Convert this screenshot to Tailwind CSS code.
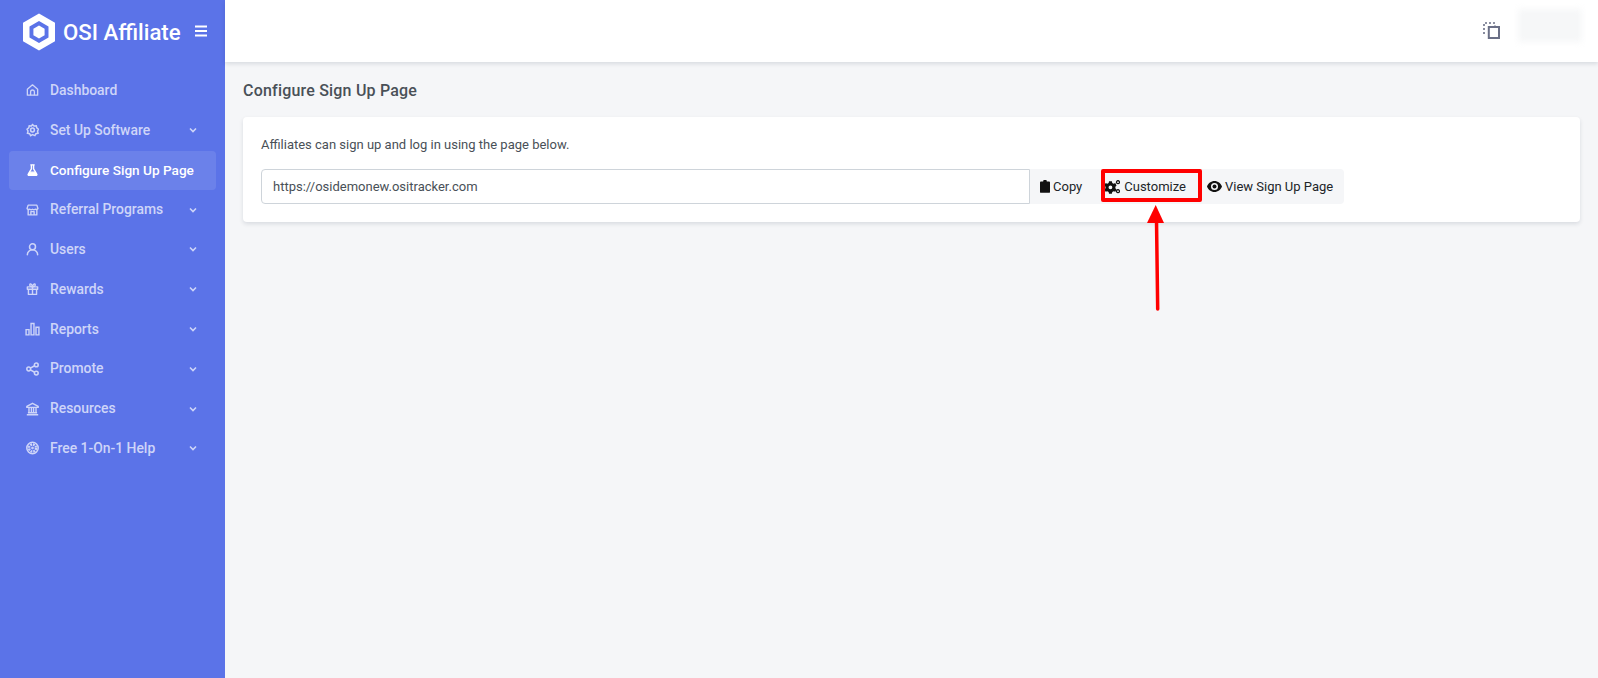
<!DOCTYPE html>
<html lang="en">
<head>
  <meta charset="UTF-8" />
  <title>Configure Sign Up Page</title>
  <script src="https://cdn.jsdelivr.net/npm/@tailwindcss/browser@4"></script>
</head>
<body class="bg-[#f5f6f8] font-['Roboto',sans-serif] h-[678px] overflow-hidden">
  <div class="flex h-[678px] relative">
    <!-- Sidebar -->
    <aside class="w-[225px] shrink-0 bg-[#5b73e8] h-full">
      <div class="h-[62px] flex items-center pl-[22px] pr-[17px]">
        <svg class="w-[34px] h-[38px] shrink-0 mt-[2px]" viewBox="0 0 34 38">
          <path fill="#fff" fill-rule="evenodd" d="M17 0.500 33 9.800V28.200L17 37.500 1 28.200V9.800Z M17 8 7.500 13.500V24.500L17 30 26.500 24.500V13.500Z"/>
          <path fill="#fff" d="M17 12.500 22.600 15.800V22.200L17 25.500 11.400 22.200V15.800Z"/>
        </svg>
        <span class="ml-[7px] text-white text-[22.200px] font-medium leading-none whitespace-nowrap mt-[2px]">OSI Affiliate</span>
        <svg class="w-[14px] h-[14px] ml-auto shrink-0" viewBox="0 0 14 14" fill="none" stroke="#fff" stroke-width="2"><path d="M1 2.500h12M1 7h12M1 11.500h12"/></svg>
      </div>
      <nav class="pt-[8.300px] px-[9px] text-[13.9px] font-medium text-[#ced5f8]">
        <a class="h-[39.8px] flex items-center pl-[17px] pr-[18px]">
          <svg class="w-[13px] h-[14px] shrink-0 mr-[11px]" viewBox="0 0 24 24" fill="none" stroke="currentColor" stroke-width="2.400" stroke-linejoin="round"><path d="M2.500 10.500 12 2.500l9.500 8V21.500h-19Z"/><path d="M8.500 21.500v-6a3.500 3.500 0 0 1 7 0v6"/></svg>
          <span>Dashboard</span>
        </a>
        <a class="h-[39.8px] flex items-center pl-[17px] pr-[18px]">
          <svg class="w-[13px] h-[14px] shrink-0 mr-[11px]" viewBox="0 0 24 24" fill="none" stroke="currentColor" stroke-width="2.800"><circle cx="12" cy="12" r="3.500"/><path d="M12 2l3 2.600 4-.4.900 3.900 3.100 2.400-1.700 3.500 1 3.900-3.900 1-2 3.500L12 20.600 8.600 22.400l-2-3.500-3.900-1 1-3.900L2 10.500l3.100-2.400.9-3.900 4 .4Z"/></svg>
          <span>Set Up Software</span>
          <svg class="w-[10px] h-[10px] ml-auto shrink-0" viewBox="0 0 10 10" fill="none" stroke="currentColor" stroke-width="1.600"><path d="M2 3.500 5 6.500 8 3.500"/></svg>
        </a>
        <a class="h-[39px] mt-[1.100px] -mb-[0.300px] flex items-center pl-[17px] pr-[13px] rounded-[4px] bg-white/10 text-white text-[13.6px]">
          <svg class="w-[13px] h-[14px] shrink-0 mr-[11px]" viewBox="0 0 24 24" fill="none" stroke="currentColor" stroke-width="2.600" stroke-linejoin="round"><path d="M8 2.500h8M10 3v7L4 20a1.500 1.500 0 0 0 1.500 2h13a1.500 1.500 0 0 0 1.500-2L14 10V3"/><path fill="currentColor" d="M7 16h10l2 5H5Z"/></svg>
          <span class="whitespace-nowrap">Configure Sign Up Page</span>
        </a>
        <a class="h-[39.8px] flex items-center pl-[17px] pr-[18px]">
          <svg class="w-[13px] h-[14px] shrink-0 mr-[11px]" viewBox="0 0 24 24" fill="none" stroke="currentColor" stroke-width="2.600" stroke-linejoin="round"><path d="M4 3h16l2 6a3.300 3.300 0 0 1-5 1.500 4 4 0 0 1-5 0 4 4 0 0 1-5 0A3.300 3.300 0 0 1 2 9Z"/><path d="M4 11v10h16V11M9 21v-6h6v6"/></svg>
          <span>Referral Programs</span>
          <svg class="w-[10px] h-[10px] ml-auto shrink-0" viewBox="0 0 10 10" fill="none" stroke="currentColor" stroke-width="1.600"><path d="M2 3.500 5 6.500 8 3.500"/></svg>
        </a>
        <a class="h-[39.8px] flex items-center pl-[17px] pr-[18px]">
          <svg class="w-[13px] h-[14px] shrink-0 mr-[11px]" viewBox="0 0 24 24" fill="none" stroke="currentColor" stroke-width="2.800" stroke-linecap="round"><circle cx="12" cy="8" r="5.500"/><path d="M2.500 22.500a9.500 9 0 0 1 19 0"/></svg>
          <span>Users</span>
          <svg class="w-[10px] h-[10px] ml-auto shrink-0" viewBox="0 0 10 10" fill="none" stroke="currentColor" stroke-width="1.600"><path d="M2 3.500 5 6.500 8 3.500"/></svg>
        </a>
        <a class="h-[39.8px] flex items-center pl-[17px] pr-[18px]">
          <svg class="w-[13px] h-[14px] shrink-0 mr-[11px]" viewBox="0 0 24 24" fill="none" stroke="currentColor" stroke-width="2.600" stroke-linejoin="round"><path d="M2.500 8h19v4.500h-19ZM4.500 12.500V22h15v-9.500M12 8v14"/><path d="M12 8C9 8 6.500 6.500 7 4s4-2 5 4c1-6 4.500-6.500 5-4s-2 4-5 4Z"/></svg>
          <span>Rewards</span>
          <svg class="w-[10px] h-[10px] ml-auto shrink-0" viewBox="0 0 10 10" fill="none" stroke="currentColor" stroke-width="1.600"><path d="M2 3.500 5 6.500 8 3.500"/></svg>
        </a>
        <a class="h-[39.8px] flex items-center pl-[16px] pr-[18px]">
          <svg class="w-[15px] h-[14px] shrink-0 mr-[10px]" viewBox="0 0 25 24" fill="none" stroke="currentColor" stroke-width="2.400"><path d="M1.500 13h5v9h-5ZM10 2.500h5V22h-5ZM18.500 9h5v13h-5Z"/></svg>
          <span>Reports</span>
          <svg class="w-[10px] h-[10px] ml-auto shrink-0" viewBox="0 0 10 10" fill="none" stroke="currentColor" stroke-width="1.600"><path d="M2 3.500 5 6.500 8 3.500"/></svg>
        </a>
        <a class="h-[39.8px] flex items-center pl-[17px] pr-[18px]">
          <svg class="w-[13px] h-[14px] shrink-0 mr-[11px]" viewBox="0 0 24 24" fill="none" stroke="currentColor" stroke-width="2.800"><circle cx="5" cy="12" r="3.500"/><circle cx="19" cy="4.500" r="3.500"/><circle cx="19" cy="19.500" r="3.500"/><path d="M8 10.300 16 6M8 13.700 16 18"/></svg>
          <span>Promote</span>
          <svg class="w-[10px] h-[10px] ml-auto shrink-0" viewBox="0 0 10 10" fill="none" stroke="currentColor" stroke-width="1.600"><path d="M2 3.500 5 6.500 8 3.500"/></svg>
        </a>
        <a class="h-[39.8px] flex items-center pl-[17px] pr-[18px]">
          <svg class="w-[13px] h-[14px] shrink-0 mr-[11px]" viewBox="0 0 24 24" fill="none" stroke="currentColor" stroke-width="2.600" stroke-linejoin="round"><path d="M12 1.500 22.500 7v2h-21V7ZM1.500 22.500h21M3.500 19h17M5.500 9v10M10 9v10M14 9v10M18.500 9v10"/></svg>
          <span>Resources</span>
          <svg class="w-[10px] h-[10px] ml-auto shrink-0" viewBox="0 0 10 10" fill="none" stroke="currentColor" stroke-width="1.600"><path d="M2 3.500 5 6.500 8 3.500"/></svg>
        </a>
        <a class="h-[39.8px] flex items-center pl-[17px] pr-[18px]">
          <svg class="w-[13px] h-[14px] shrink-0 mr-[11px]" viewBox="0 0 24 24" fill="none" stroke="currentColor"><circle cx="12" cy="12" r="10.500" stroke-width="2.800"/><circle cx="12" cy="12" r="6.500" stroke-width="4.500" stroke-dasharray="3.500 1.600"/><circle cx="12" cy="12" r="2" fill="currentColor"/></svg>
          <span>Free 1-On-1 Help</span>
          <svg class="w-[10px] h-[10px] ml-auto shrink-0" viewBox="0 0 10 10" fill="none" stroke="currentColor" stroke-width="1.600"><path d="M2 3.500 5 6.500 8 3.500"/></svg>
        </a>
      </nav>
    </aside>

    <!-- Main -->
    <main class="flex-1 min-w-0">
      <header class="h-[62px] bg-white shadow-[0_2px_4px_rgba(15,34,58,0.12)] flex items-center justify-end pr-[16px]">
        <svg class="w-[17px] h-[17px] mr-[18px] mt-[-1px]" viewBox="0 0 17 17" fill="none" stroke="#6b7087">
          <rect x="5.800" y="5" width="10.200" height="11" stroke-width="2"/>
          <path d="M1 12V1h11v2.500" stroke-width="1.600" stroke-dasharray="2 2"/>
        </svg>
        <div class="w-[64px] h-[33px] bg-[#f6f7f8] blur-[3px] mt-[-11px]"></div>
      </header>
      <div class="px-[18px]">
        <h1 class="text-[16px] font-medium text-[#495057] leading-[20px] mt-[19px] tracking-[0.2px]">Configure Sign Up Page</h1>
        <div class="mt-[16px] bg-white rounded-[4px] shadow-[0_2px_4px_rgba(15,34,58,0.12)] h-[105px] pt-[18px] px-[18px]">
          <p class="text-[13px] text-[#495057] leading-[20px]">Affiliates can sign up and log in using the page below.</p>
          <div class="flex mt-[14px] h-[35px] text-[13px]">
            <div class="w-[769px] border border-[#ced4da] rounded-l-[4px] flex items-center pl-[11px] text-[#495057]">https://osidemonew.ositracker.com</div>
            <div class="relative flex items-center bg-[#f5f6f8] rounded-r-[4px] text-[#212529] whitespace-nowrap">
              <div class="flex items-center h-full pl-[10px] pr-[19px]">
                <svg class="w-[10px] h-[13px] mr-[3px]" viewBox="0 0 11 14" fill="#111"><path d="M3.500 1.500a2 2 0 0 1 4 0H10a1 1 0 0 1 1 1V13a1 1 0 0 1-1 1H1a1 1 0 0 1-1-1V2.500a1 1 0 0 1 1-1Z"/></svg>
                Copy
              </div>
              <div class="flex items-center h-full pl-[3px] pr-[15px]">
                <svg class="w-[16px] h-[14px] mr-[4px]" viewBox="0 0 16 14" fill="#111">
                  <path transform="translate(-1 -1.100) scale(1.2)" fill-rule="evenodd" d="M5 2h2.400l.3 1.400 1.200.6 1.300-.5 1.100 2-1 1 0 1.300 1 1-1.100 2-1.300-.5-1.200.7-.3 1.400H5l-.3-1.400-1.200-.7-1.300.5-1.100-2 1-1 0-1.300-1-1 1.100-2 1.300.5 1.200-.6Z M6.200 5.400a1.600 1.600 0 1 0 0 3.200 1.600 1.600 0 0 0 0-3.200Z"/>
                  <path fill="none" stroke="#111" stroke-width="1.300" d="M14 .7a1.500 1.500 0 1 1-.01 0ZM14 9.700a1.500 1.500 0 1 1-.01 0Z"/>
                </svg>
                Customize
              </div>
              <div class="flex items-center h-full pl-[6px] pr-[11px]">
                <svg class="w-[15px] h-[11px] mr-[3px]" viewBox="0 0 15 11" fill="#111"><path fill-rule="evenodd" d="M7.500 0C11 0 13.700 2.300 15 5.500 13.700 8.700 11 11 7.500 11S1.300 8.700 0 5.500C1.300 2.300 4 0 7.500 0Z M7.500 2a3.500 3.500 0 1 0 0 7 3.500 3.500 0 0 0 0-7Z"/><circle cx="7.500" cy="5.500" r="2"/></svg>
                View Sign Up Page
              </div>
              <!-- red annotation box -->
              <div class="absolute left-[71px] top-0 w-[101px] h-[33px] border-[4px] border-[#ff0000] rounded-[2px]"></div>
            </div>
          </div>
        </div>
      </div>
    </main>

    <!-- red arrow annotation -->
    <svg class="absolute left-[1140px] top-[200px] w-[34px] h-[112px]" viewBox="0 0 34 112" fill="none">
      <path d="M16.500 20 17.700 109" stroke="#ff0000" stroke-width="3.500" stroke-linecap="round"/>
      <path d="M15.700 5 24 23H7Z" fill="#ff0000"/>
    </svg>
  </div>
</body>
</html>
